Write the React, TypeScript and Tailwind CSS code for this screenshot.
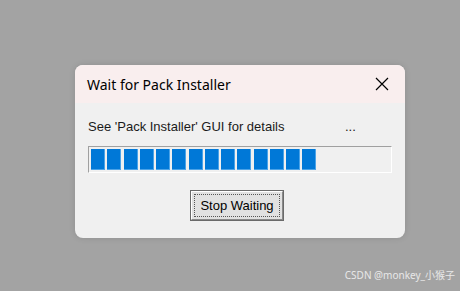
export default function App() {
  const segments = Array.from({ length: 14 })

  return (
    <div className="relative w-[460px] h-[291px] bg-[#a3a3a3] pt-[65px] pl-[75px]">
      {/* Dialog */}
      <div className="w-[330px] h-[173px] rounded-[8px] overflow-hidden flex flex-col bg-[#f0f0f0] shadow-[0_0_6px_rgba(0,0,0,0.12)]">
        {/* Title bar */}
        <div className="h-[38px] bg-[#f9eeee] flex items-center justify-between pl-[12px] pr-[16px]">
          <span className="text-[14px] text-black" style={{ fontFamily: '"Segoe UI", "Noto Sans", sans-serif' }}>
            Wait for Pack Installer
          </span>
          <svg width="14" height="14" viewBox="0 0 14 14" className="text-black">
            <path d="M1 1 L13 13 M13 1 L1 13" stroke="currentColor" strokeWidth="1.2" fill="none" />
          </svg>
        </div>

        {/* Body */}
        <div
          className="flex-1 flex flex-col pl-[13px] pr-[13px] pt-[15px]"
          style={{ fontFamily: '"Liberation Sans", Arial, sans-serif' }}
        >
          <div className="flex items-center h-[18px] text-[13px] text-[#1a1a1a]">
            <span className="w-[257px] whitespace-nowrap">See 'Pack Installer' GUI for details</span>
            <span>...</span>
          </div>

          {/* Progress bar */}
          <div className="mt-[10px] w-[304px] h-[27px] border-t border-l border-t-[#a0a0a0] border-l-[#a0a0a0] border-b border-r border-b-white border-r-white bg-[#f0f0f0] flex items-center pl-[2px] gap-[2.25px]">
            {segments.map((_, i) => (
              <div key={i} className="w-[14px] h-[21px] bg-[#0078d7] border-r border-b border-[#4ba3e8]" />
            ))}
          </div>

          {/* Button */}
          <div className="flex justify-center mt-[17px] pr-[6px]">
            <button className="w-[94px] h-[31px] border border-[#6a6a6a] flex">
              <span className="flex-1 flex bg-[#e1e1e1] border border-t-white border-l-white border-b-[#8a8a8a] border-r-[#8a8a8a] p-[2px]">
                <span className="flex-1 flex items-center justify-center border border-dotted border-[#555] text-[13px] text-black whitespace-nowrap">
                  Stop Waiting
                </span>
              </span>
            </button>
          </div>
        </div>
      </div>

      {/* Watermark */}
      <div
        className="absolute right-[5px] bottom-[8px] text-[10px] text-[#e8e8e8]"
        style={{ fontFamily: '"Noto Sans", "Noto Sans CJK SC", sans-serif' }}
      >
        CSDN @monkey_小猴子
      </div>
    </div>
  )
}
